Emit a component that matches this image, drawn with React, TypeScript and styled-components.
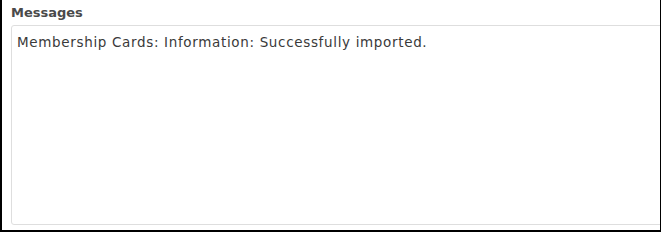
import React from "react";
import styled, { createGlobalStyle } from "styled-components";

const GlobalStyle = createGlobalStyle`
  html, body {
    margin: 0;
    padding: 0;
    background: #ffffff;
  }
  body {
    font-family: "DejaVu Sans", "Liberation Sans", sans-serif;
  }
`;

const Frame = styled.div`
  box-sizing: border-box;
  width: 661px;
  height: 232px;
  border-left: 2px solid #000;
  border-right: 1px solid #000;
  border-bottom: 2px solid #000;
  overflow: hidden;
  padding: 4px 0 0 9px;
  display: flex;
  flex-direction: column;
`;

const Label = styled.label`
  font-size: 13px;
  font-weight: 700;
  color: #4a4a4a;
  line-height: 18px;
  margin-bottom: 3px;
`;

const MessageBox = styled.div`
  box-sizing: border-box;
  width: 680px;
  height: 200px;
  border: 1px solid #dedede;
  border-radius: 3px;
  padding: 6px 5px;
  font-size: 13.5px;
  letter-spacing: 0.66px;
  line-height: 20px;
  color: #3a3a3a;
`;

const App: React.FC = () => {
  return (
    <>
      <GlobalStyle />
      <Frame>
        <Label>Messages</Label>
        <MessageBox>Membership Cards: Information: Successfully imported.</MessageBox>
      </Frame>
    </>
  );
};

export default App;
